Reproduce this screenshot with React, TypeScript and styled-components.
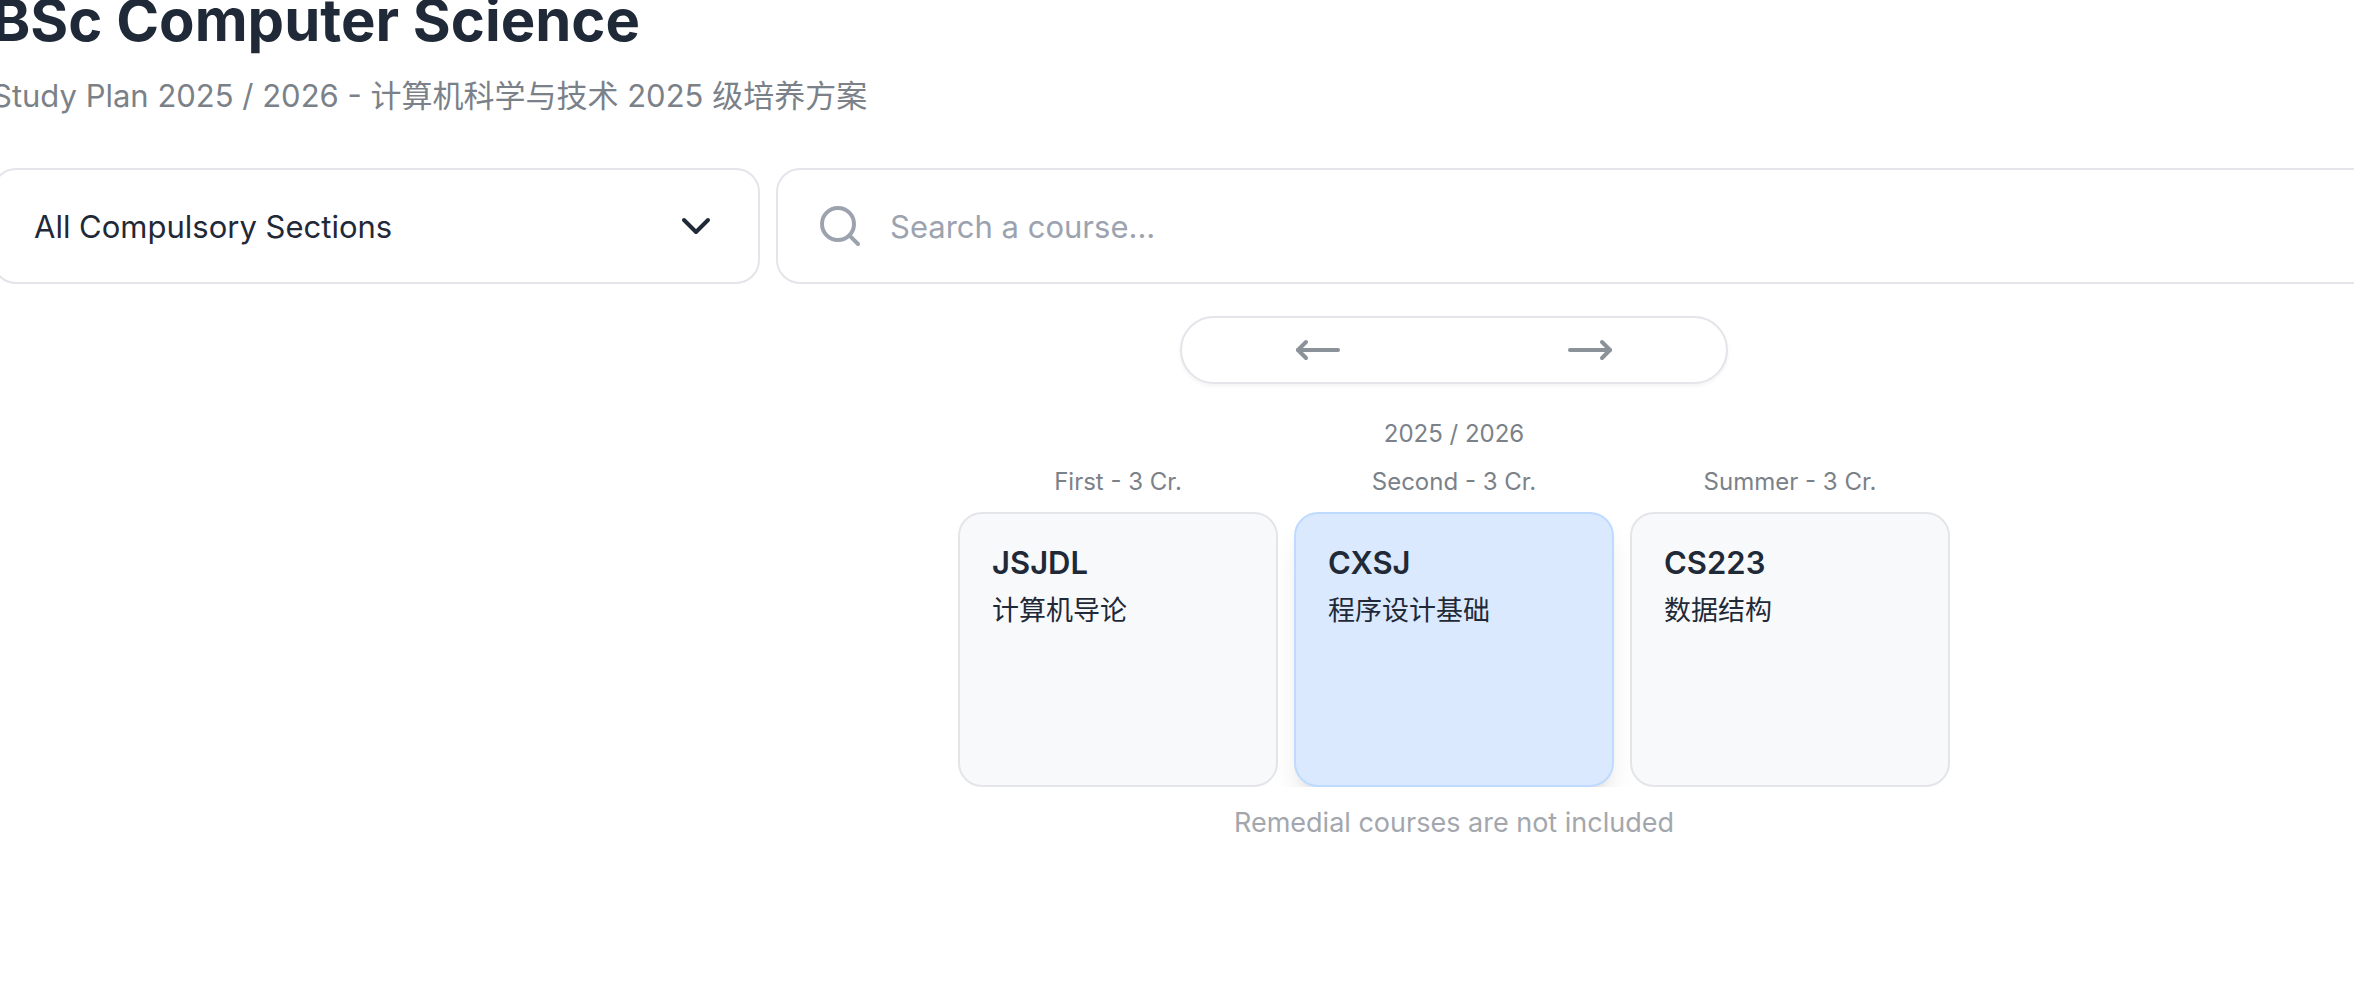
import React from 'react';
import styled, { createGlobalStyle } from 'styled-components';
import { ChevronDown, MoveLeft, MoveRight, Search } from 'lucide-react';

const GlobalStyle = createGlobalStyle`
  *, *::before, *::after { box-sizing: border-box; }
  body {
    margin: 0;
    overflow: hidden;
    background: #ffffff;
    color: #1f2937;
    font-family: Inter, "Noto Sans CJK SC", sans-serif;
  }
  h1, h2, p { margin: 0; }
  button, input, select { font: inherit; color: inherit; }
`;

const Page = styled.main`
  display: flex;
  flex-direction: column;
  margin: -16px -562px 0 -8px;
`;

const Title = styled.h1`
  font-size: 58px;
  line-height: 72px;
  font-weight: 700;
`;

const Subtitle = styled.p`
  margin-top: 16px;
  font-size: 31px;
  line-height: 48px;
  color: #7b8188;
`;

const Filters = styled.form`
  display: flex;
  gap: 16px;
  margin-top: 48px;
`;

const Field = styled.div<{ $grow?: boolean }>`
  display: flex;
  align-items: center;
  height: 116px;
  border: 2px solid #e4e4ea;
  border-radius: 24px;
  background: #ffffff;
  ${({ $grow }) => ($grow ? 'flex: 1; gap: 26px; padding: 0 38px;' : 'flex: 0 0 768px; display: grid; padding: 0;')}
`;

const SectionSelect = styled.select`
  grid-area: 1 / 1;
  width: 100%;
  height: 100%;
  padding: 0 40px;
  border: 0;
  border-radius: 24px;
  background: transparent;
  appearance: none;
  outline: none;
  font-size: 31px;
`;

const SelectArrow = styled(ChevronDown)`
  grid-area: 1 / 1;
  justify-self: end;
  margin-right: 38px;
  pointer-events: none;
`;

const SearchInput = styled.input`
  flex: 1;
  height: 100%;
  padding: 0;
  border: 0;
  background: transparent;
  outline: none;
  font-size: 31px;
  &::placeholder { color: #9ca3af; opacity: 1; }
`;

const Plan = styled.section`
  display: flex;
  flex-direction: column;
  align-items: center;
  margin-top: 32px;
`;

const Pager = styled.nav`
  display: flex;
  width: 548px;
  height: 68px;
  border: 2px solid #e4e4ea;
  border-radius: 34px;
  background: #ffffff;
  box-shadow: 0 2px 4px rgba(0, 0, 0, 0.05);
`;

const PagerButton = styled.button`
  display: flex;
  flex: 1;
  align-items: center;
  justify-content: center;
  padding: 0;
  border: 0;
  background: none;
  color: #8c9299;
`;

const Caption = styled.p`
  font-size: 24px;
  line-height: 32px;
  text-align: center;
  color: #7b8188;
`;

const Year = styled(Caption)`
  margin-top: 34px;
`;

const Terms = styled.div`
  display: flex;
  gap: 16px;
  margin-top: 16px;
  overflow: hidden;
`;

const Term = styled.section`
  display: flex;
  flex-direction: column;
  gap: 14px;
  width: 320px;
`;

const Card = styled.article<{ $active?: boolean }>`
  position: relative;
  height: 275px;
  padding: 33px 32px;
  border: 2px solid ${({ $active }) => ($active ? '#bedbff' : '#e4e5e9')};
  border-radius: 24px;
  background: ${({ $active }) => ($active ? '#dbe9fe' : '#f8f9fb')};
  ${({ $active }) =>
    $active && 'box-shadow: 0 20px 30px -6px rgba(0, 0, 0, 0.1), 0 8px 12px -8px rgba(0, 0, 0, 0.1);'}
`;

const CourseCode = styled.h2`
  font-size: 31px;
  line-height: 32px;
  font-weight: 600;
`;

const CourseName = styled.p`
  margin-top: 12px;
  font-size: 27px;
  line-height: 40px;
`;

const Note = styled.p`
  margin-top: 16px;
  font-size: 27px;
  line-height: 40px;
  color: #a3a7ad;
`;

const terms = [
  { label: 'First - 3 Cr.', code: 'JSJDL', name: '计算机导论' },
  { label: 'Second - 3 Cr.', code: 'CXSJ', name: '程序设计基础', active: true },
  { label: 'Summer - 3 Cr.', code: 'CS223', name: '数据结构' },
];

export default function App() {
  return (
    <>
      <GlobalStyle />
      <Page>
        <Title>BSc Computer Science</Title>
        <Subtitle>Study Plan 2025 / 2026 - 计算机科学与技术 2025 级培养方案</Subtitle>
        <Filters>
          <Field>
            <SectionSelect aria-label="Sections">
              <option>All Compulsory Sections</option>
            </SectionSelect>
            <SelectArrow size={48} />
          </Field>
          <Field $grow>
            <Search size={48} color="#9ca3af" />
            <SearchInput type="search" aria-label="Search a course" placeholder="Search a course..." />
          </Field>
        </Filters>
        <Plan>
          <Pager aria-label="Study years">
            <PagerButton type="button" aria-label="Previous year">
              <MoveLeft size={48} />
            </PagerButton>
            <PagerButton type="button" aria-label="Next year">
              <MoveRight size={48} />
            </PagerButton>
          </Pager>
          <Year>2025 / 2026</Year>
          <Terms>
            {terms.map((term) => (
              <Term key={term.code}>
                <Caption>{term.label}</Caption>
                <Card $active={term.active}>
                  <CourseCode>{term.code}</CourseCode>
                  <CourseName>{term.name}</CourseName>
                </Card>
              </Term>
            ))}
          </Terms>
          <Note>Remedial courses are not included</Note>
        </Plan>
      </Page>
    </>
  );
}
